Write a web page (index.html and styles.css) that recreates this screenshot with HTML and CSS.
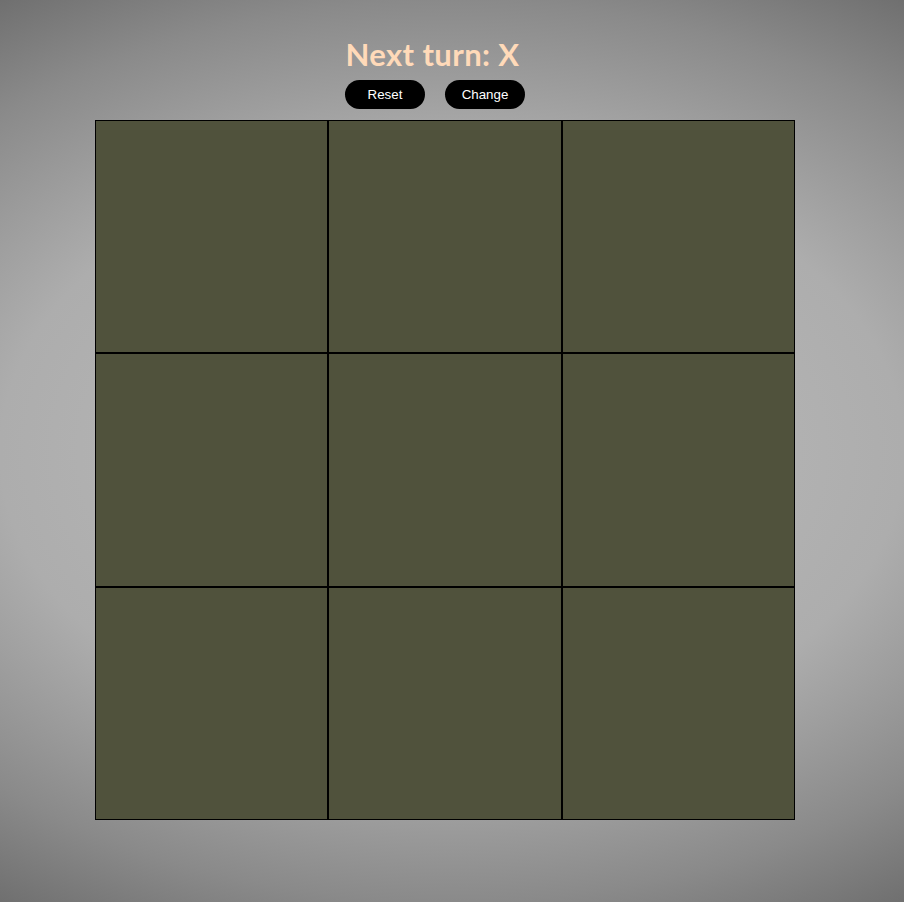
FILE: index.html
```html
<!DOCTYPE html>
<html lang="en">
<head>
<meta charset="utf-8">
<title>Tic Tac Toe</title>
<link rel="stylesheet" href="styles.css">
</head>
<body>
<div class="page">
  <h1 class="status">Next turn: X</h1>
  <div class="controls">
    <button class="btn">Reset</button>
    <button class="btn">Change</button>
  </div>
  <div class="board">
    <div class="cell"></div>
    <div class="cell"></div>
    <div class="cell"></div>
    <div class="cell"></div>
    <div class="cell"></div>
    <div class="cell"></div>
    <div class="cell"></div>
    <div class="cell"></div>
    <div class="cell"></div>
  </div>
</div>
</body>
</html>
```

FILE: styles.css
```css
html {
  min-height: 100%;
  background: radial-gradient(ellipse 904px 600px at 50% 50%, #bebebe 0%, #adadad 50%, #8a8a8a 75%, #707070 90%, #5e5e5e 100%);
  background-color: #666;
}
body {
  margin: 0;
  height: 902px;
}
.page {
  width: 890px;
  display: flex;
  flex-direction: column;
  align-items: center;
  padding-top: 36px;
}
.status {
  margin: 0;
  font-family: "Lato", "Open Sans", sans-serif;
  font-weight: 700;
  font-size: 31px;
  letter-spacing: 0.4px;
  line-height: 36px;
  color: #ffdab9;
  padding-right: 25px;
}
.controls {
  display: flex;
  margin-top: 8px;
}
.btn {
  width: 80px;
  height: 29px;
  margin-right: 20px;
  border: none;
  border-radius: 15px;
  background: #000;
  color: #fff;
  font-family: "Liberation Sans", Arial, sans-serif;
  font-size: 13.33px;
  padding: 0;
}
.board {
  margin-top: 11px;
  width: 700px;
  height: 700px;
  display: grid;
  grid-template-columns: repeat(3, 1fr);
  grid-template-rows: repeat(3, 1fr);
}
.cell {
  box-sizing: border-box;
  border: 1px solid #000;
  background: #50523c;
}
```
